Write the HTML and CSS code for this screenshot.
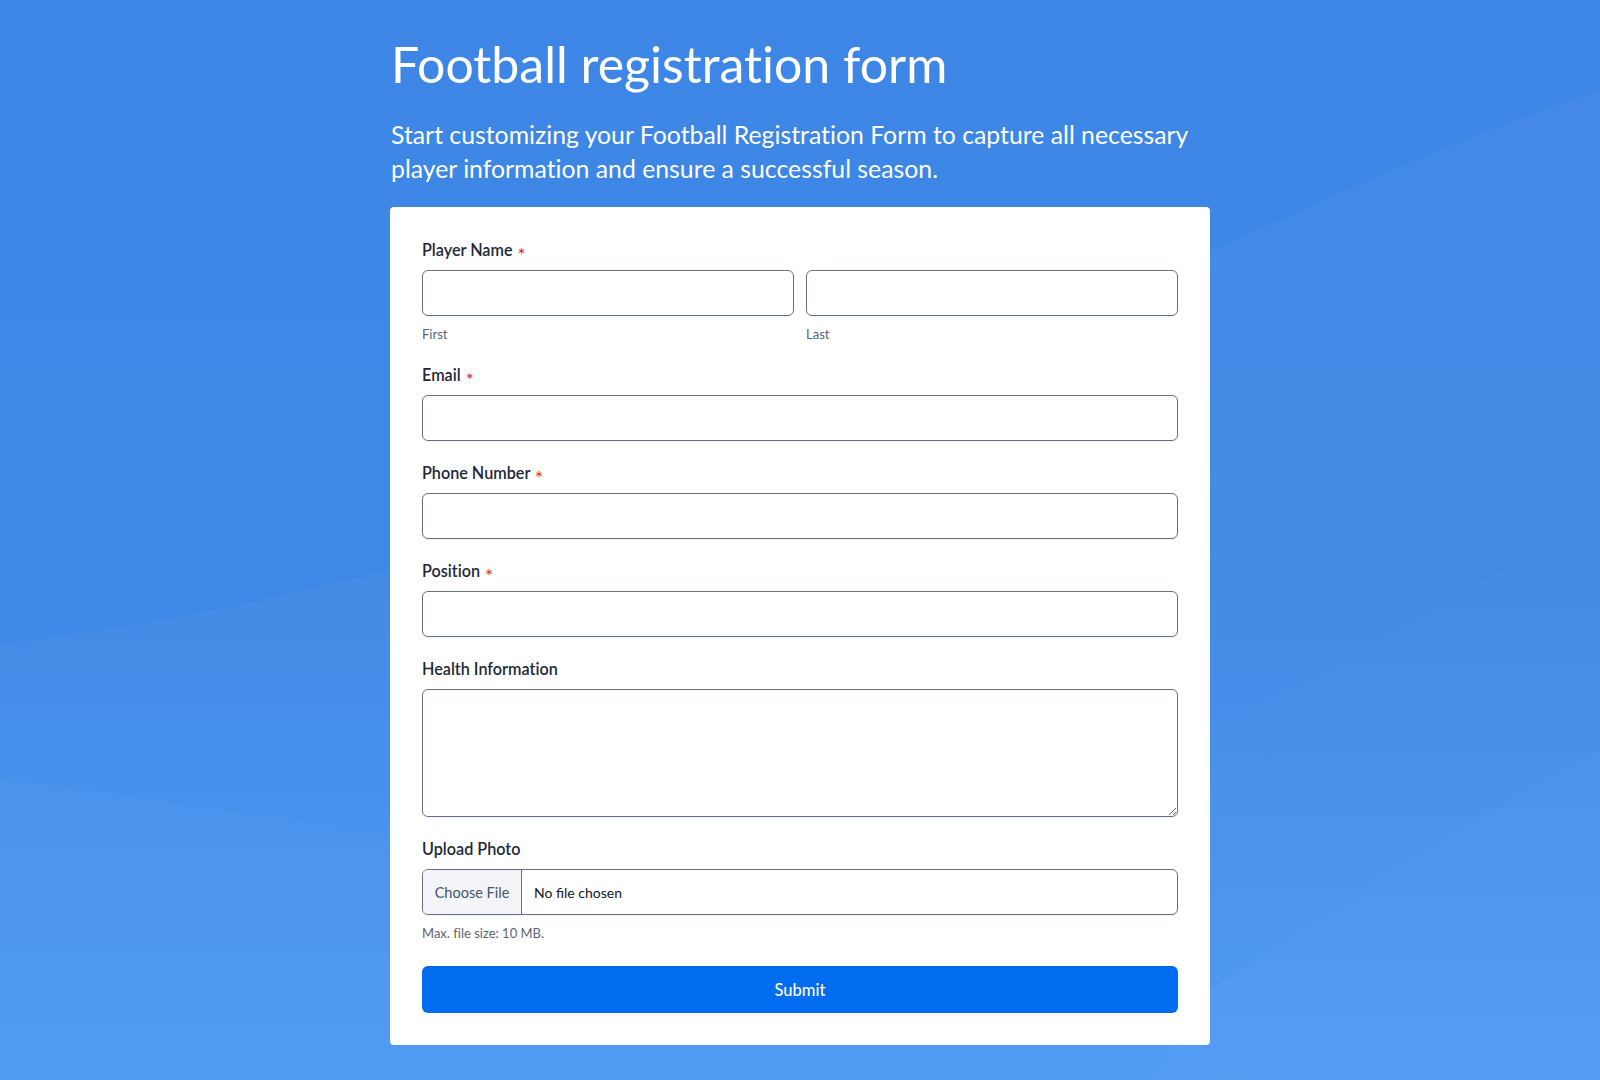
FILE: index.html
```html
<!DOCTYPE html>
<html lang="en">
<head>
<meta charset="utf-8">
<title>Football registration form</title>
<link rel="stylesheet" href="styles.css">
</head>
<body>
<svg class="bg" viewBox="0 0 1600 1080" preserveAspectRatio="none" aria-hidden="true">
  <path d="M0,644 C300,610 700,500 1050,330 C1250,230 1450,140 1600,90 L1600,1080 L0,1080 Z" fill="#ffffff" fill-opacity="0.03"/>
  <path d="M0,778 C250,810 500,860 800,900 C1000,930 1150,1000 1250,1080 L0,1080 Z" fill="#ffffff" fill-opacity="0.02"/>
  <path d="M1210,727 C1300,690 1380,640 1450,600 C1500,570 1560,540 1600,520 L1600,1080 L1210,1080 Z" fill="#ffffff" fill-opacity="0.012"/>
  <path d="M1210,988 C1300,930 1450,830 1600,750 L1600,1080 L1150,1080 Z" fill="#ffffff" fill-opacity="0.018"/>
</svg>
<main class="page">
  <h1 class="title">Football registration form</h1>
  <p class="subtitle">Start customizing your Football Registration Form to capture all necessary player information and ensure a successful season.</p>
  <form class="card">
    <div class="field">
      <div class="label">Player Name <span class="req">*</span></div>
      <div class="name-row">
        <div class="name-col">
          <input class="input" type="text" aria-label="First">
          <div class="sublabel">First</div>
        </div>
        <div class="name-col">
          <input class="input" type="text" aria-label="Last">
          <div class="sublabel">Last</div>
        </div>
      </div>
    </div>
    <div class="field">
      <label class="label">Email <span class="req">*</span></label>
      <input class="input" type="email">
    </div>
    <div class="field">
      <label class="label">Phone Number <span class="req">*</span></label>
      <input class="input" type="tel">
    </div>
    <div class="field">
      <label class="label">Position <span class="req">*</span></label>
      <input class="input" type="text">
    </div>
    <div class="field">
      <label class="label">Health Information</label>
      <textarea class="input textarea"></textarea>
    </div>
    <div class="field field-upload">
      <label class="label">Upload Photo</label>
      <input class="input file" type="file">
      <div class="sublabel">Max. file size: 10 MB.</div>
    </div>
    <button class="submit" type="button">Submit</button>
  </form>
</main>
</body>
</html>
```
FILE: styles.css
```css
html, body {
  margin: 0;
  padding: 0;
}
body {
  min-height: 1080px;
  background: linear-gradient(180deg, #3d86e5 0%, #3e88e6 55%, #4a96f4 100%);
  font-family: Lato, "Noto Sans", sans-serif;
  font-variant-ligatures: none;
  color: #101828;
  position: relative;
  overflow: hidden;
}
.bg {
  position: absolute;
  left: 0;
  top: 0;
  width: 1600px;
  height: 1080px;
  z-index: 0;
}
.page {
  position: relative;
  z-index: 1;
  width: 820px;
  margin: 0 auto;
  padding-top: 33px;
}
.title {
  margin: 0 0 0 1px;
  font-size: 50px;
  line-height: 62px;
  font-weight: 400;
  color: #ffffff;
}
.subtitle {
  margin: 23px 0 21px 1px;
  font-size: 24.8px;
  line-height: 34px;
  color: #ffffff;
  font-weight: 400;
}
.card {
  background: #ffffff;
  border-radius: 4px;
  padding: 31px 32px 32px;
  display: flex;
  flex-direction: column;
}
.field {
  display: flex;
  flex-direction: column;
  margin-bottom: 20px;
}
.field-upload {
  margin-bottom: 24px;
}
.label {
  display: block;
  height: 24px;
  font-size: 16.2px;
  line-height: 24px;
  font-weight: 600;
  color: #1d2939;
  margin-bottom: 8px;
}
.req {
  display: inline-block;
  color: #d92d20;
  font-size: 19px;
  font-weight: 400;
  line-height: 15px;
  margin-left: 1px;
  vertical-align: -6px;
}
.name-row {
  display: flex;
  gap: 12px;
}
.name-col {
  flex: 1;
  display: flex;
  flex-direction: column;
}
.input {
  display: block;
  box-sizing: border-box;
  width: 100%;
  height: 46px;
  margin: 0;
  border: 1px solid #667085;
  border-radius: 6px;
  background: #ffffff;
  box-shadow: 0 1px 2px rgba(16, 24, 40, 0.06);
  font-family: Lato, "Noto Sans", sans-serif;
  font-size: 15px;
  padding: 0 12px;
  color: #101828;
}
.textarea {
  height: 128px;
  resize: vertical;
  padding: 10px 12px;
}
.sublabel {
  margin-top: 9px;
  font-size: 13px;
  line-height: 18px;
  color: #5a6474;
}
.file {
  padding: 0;
  overflow: hidden;
  font-size: 14px;
  color: #101828;
  line-height: 44px;
}
.file::file-selector-button {
  height: 44px;
  width: 99px;
  margin: 0 12px 0 0;
  border: none;
  border-right: 1px solid #667085;
  background: #f2f4f7;
  color: #475467;
  font-family: Lato, "Noto Sans", sans-serif;
  font-size: 14.5px;
  padding: 0;
}
.submit {
  height: 47px;
  border: none;
  border-radius: 6px;
  background: #006cf0;
  color: #ffffff;
  font-family: Lato, "Noto Sans", sans-serif;
  font-size: 16.5px;
  font-weight: 500;
  cursor: pointer;
}
```
